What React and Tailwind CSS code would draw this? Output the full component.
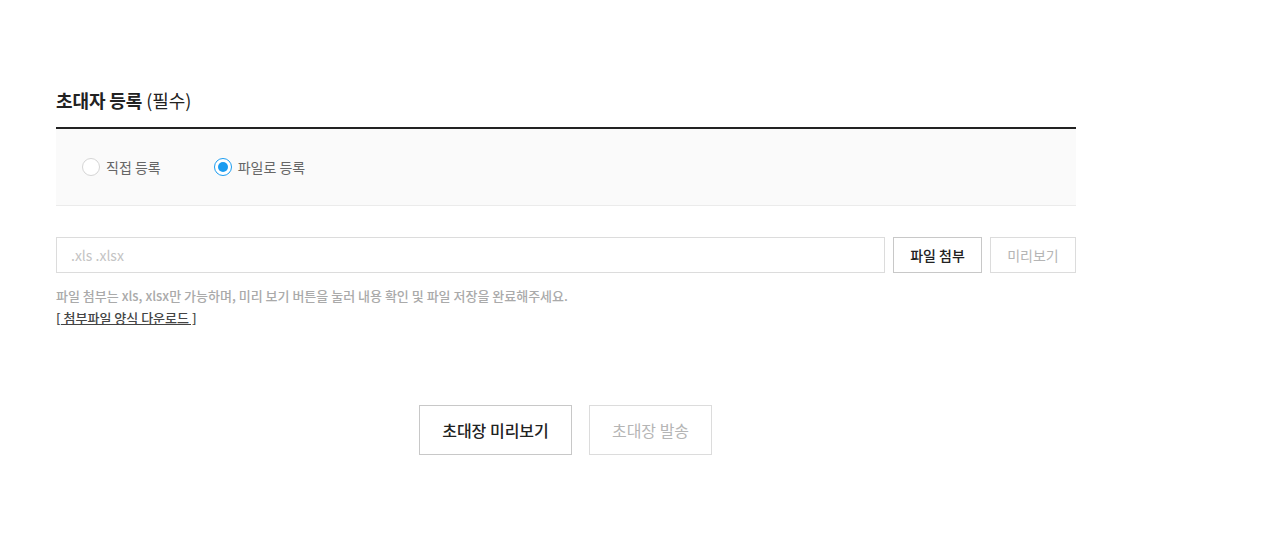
export default function App() {
  const font = { fontFamily: '"Noto Sans CJK KR", "Noto Sans", sans-serif' };
  return (
    <div className="w-[1271px] h-[556px] bg-white" style={font}>
      <div className="ml-[56px] w-[1020px] pt-[86px]">
        <h2 className="text-[18px] leading-[28px] font-bold text-[#222] tracking-[-0.1px]">
          초대자 등록 <span className="font-normal">(필수)</span>
        </h2>
        <div className="mt-[13px] h-[2px] bg-[#222]" />
        <div className="h-[77px] bg-[#fafafa] border-b border-[#ebebeb] flex items-center pl-[26px] gap-[53px] text-[14px] text-[#666]">
          <label className="flex items-center gap-[6px]">
            <span className="w-[18px] h-[18px] rounded-full border border-[#d5d5d5] bg-white" />
            <span>직접 등록</span>
          </label>
          <label className="flex items-center gap-[6px]">
            <span className="w-[18px] h-[18px] rounded-full border-[1.5px] border-[#1a9cf0] bg-white flex items-center justify-center">
              <span className="w-[10px] h-[10px] rounded-full bg-[#1a9cf0]" />
            </span>
            <span>파일로 등록</span>
          </label>
        </div>
        <div className="mt-[31px] flex gap-[8px]">
          <div className="w-[829px] shrink-0 h-[36px] border border-[#dcdcdc] flex items-center pl-[14px] text-[14px] text-[#c4c4c4]">
            .xls .xlsx
          </div>
          <button className="w-[89px] shrink-0 h-[36px] border border-[#c8c8c8] text-[14px] font-medium text-[#222]">
            파일 첨부
          </button>
          <button className="w-[86px] shrink-0 h-[36px] border border-[#dcdcdc] text-[14px] text-[#b5b5b5]">
            미리보기
          </button>
        </div>
        <p className="mt-[13px] text-[13px] leading-[20px] font-medium text-[#aaa]">
          파일 첨부는 xls, xlsx만 가능하며, 미리 보기 버튼을 눌러 내용 확인 및 파일 저장을 완료해주세요.
        </p>
        <p className="mt-[2px] text-[13px] leading-[20px] font-medium text-[#444] underline">
          [ 첨부파일 양식 다운로드 ]
        </p>
        <div className="mt-[77px] flex pl-[363px] gap-[17px]">
          <button className="w-[153px] h-[50px] border border-[#c8c8c8] text-[16px] font-medium text-[#222]">
            초대장 미리보기
          </button>
          <button className="w-[123px] h-[50px] border border-[#dcdcdc] text-[16px] text-[#b5b5b5]">
            초대장 발송
          </button>
        </div>
      </div>
    </div>
  );
}
